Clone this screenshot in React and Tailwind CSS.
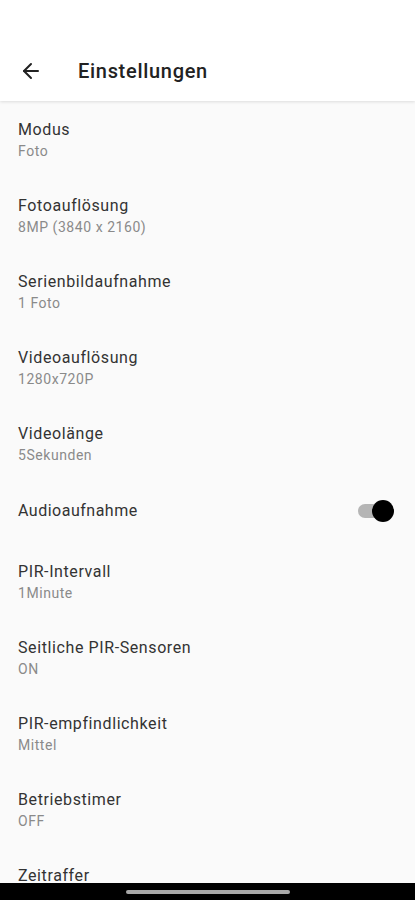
import { ArrowLeft } from 'lucide-react'

const items = [
  { title: 'Modus', value: 'Foto' },
  { title: 'Fotoauflösung', value: '8MP (3840 x 2160)' },
  { title: 'Serienbildaufnahme', value: '1 Foto' },
  { title: 'Videoauflösung', value: '1280x720P' },
  { title: 'Videolänge', value: '5Sekunden' },
  { title: 'Audioaufnahme', toggle: true },
  { title: 'PIR-Intervall', value: '1Minute' },
  { title: 'Seitliche PIR-Sensoren', value: 'ON' },
  { title: 'PIR-empfindlichkeit', value: 'Mittel' },
  { title: 'Betriebstimer', value: 'OFF' },
  { title: 'Zeitraffer', value: 'OFF' },
]

const Toggle = () => (
  <div className="relative w-[36px] h-[22px] flex items-center">
    <div className="w-[34px] h-[14px] rounded-full bg-[#b5b5b5]" />
    <div className="absolute right-0 top-0 w-[22px] h-[22px] rounded-full bg-black" />
  </div>
)

const App = () => {
  return (
    <div className="w-[415px] h-[900px] overflow-hidden flex flex-col bg-[#fafafa] font-['Roboto',sans-serif]">
      {/* Header */}
      <div className="relative z-10 h-[101px] bg-white flex items-end pb-[18px] shadow-[0_1px_3px_rgba(0,0,0,0.12)] shrink-0">
        <div className="flex items-center h-[24px]">
          <ArrowLeft className="ml-[19px] w-[24px] h-[24px] text-[#222]" strokeWidth={2} />
          <span className="ml-[35px] text-[20px] font-medium text-[#222] tracking-[0.7px]">Einstellungen</span>
        </div>
      </div>

      {/* List */}
      <div className="flex-1 overflow-hidden">
        {items.map((item) =>
          item.toggle ? (
            <div key={item.title} className="h-[62px] flex items-center justify-between pl-[18px] pr-[21px] pb-[2px]">
              <span className="text-[16px] text-[#333] tracking-[0.5px]">{item.title}</span>
              <Toggle />
            </div>
          ) : (
            <div key={item.title} className="h-[76px] pt-[19px] pl-[18px]">
              <div className="text-[16px] leading-[20px] text-[#333] tracking-[0.6px]">{item.title}</div>
              <div className="text-[14px] leading-[22px] text-[#8a8a8a] tracking-[0.55px]">{item.value}</div>
            </div>
          )
        )}
      </div>

      {/* Navigation bar */}
      <div className="h-[17px] bg-black flex items-center justify-center shrink-0">
        <div className="w-[164px] h-[4px] rounded-full bg-[#a8a8a8]" />
      </div>
    </div>
  )
}

export default App
